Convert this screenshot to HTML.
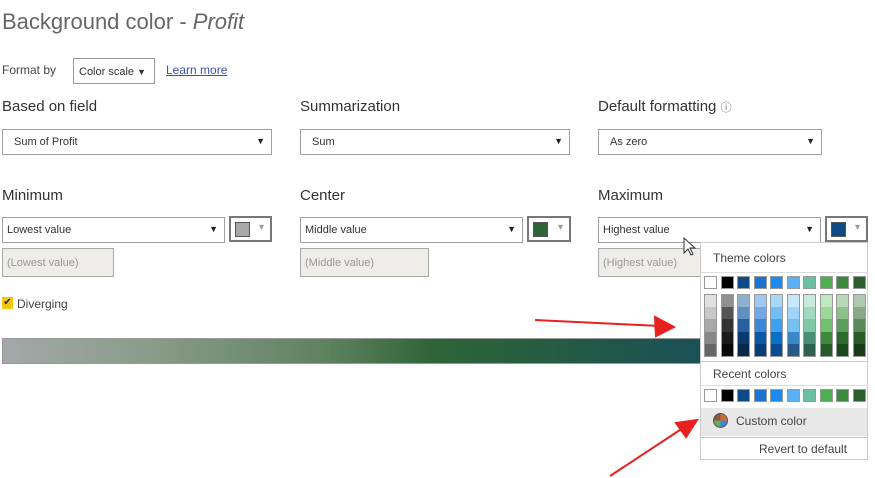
<!DOCTYPE html>
<html><head><style>
*{box-sizing:border-box;margin:0;padding:0}
body{width:875px;height:478px;background:#fff;font-family:"Liberation Sans",sans-serif;position:relative;overflow:hidden;color:#333}
.a{position:absolute}
.lbl{font-size:15px;color:#333}
.sel{position:absolute;height:26px;border:1px solid #a0a0a0;background:#fff;font-size:11px;padding:6px 11px;color:#333}
.sel::after{content:"▼";position:absolute;right:6px;top:6px;font-size:9px;color:#222}
.cb{position:absolute;height:26px;border:2px solid #777;background:#fff}
.cb i{position:absolute;left:4px;top:4px;width:15px;height:15px;border:1px solid #555}
.cb::after{content:"▾";position:absolute;right:6px;top:4px;font-size:10px;color:#999}
.sub{position:absolute;height:29px;border:1px solid #a8a8a8;background:#eeede8;font-size:11px;color:#999;padding:8px 4px}
.pop{position:absolute;left:700px;top:242px;width:168px;height:218px;border:1px solid #ccc;background:#fff}
.sw{position:absolute;width:13px;height:13px;border:1px solid #999}
</style></head><body>
<div class="a" style="left:2px;top:9px;font-size:22px;color:#666">Background color - <i>Profit</i></div>
<div class="a" style="left:2px;top:63px;font-size:12px;color:#444">Format by</div>
<div class="a" style="left:73px;top:58px;width:82px;height:26px;border:1px solid #999;font-size:11px;padding:7px 5px">Color scale <span style="font-size:9px">▼</span></div>
<div class="a" style="left:166px;top:63px;font-size:12px;color:#3c4fb0;text-decoration:underline">Learn more</div>

<div class="a lbl" style="left:2px;top:98px">Based on field</div>
<div class="a lbl" style="left:300px;top:98px">Summarization</div>
<div class="a lbl" style="left:598px;top:98px">Default formatting <span style="font-size:11px;color:#666">ⓘ</span></div>
<div class="sel" style="left:2px;top:129px;width:270px">Sum of Profit</div>
<div class="sel" style="left:300px;top:129px;width:270px">Sum</div>
<div class="sel" style="left:598px;top:129px;width:224px">As zero</div>

<div class="a lbl" style="left:2px;top:187px">Minimum</div>
<div class="a lbl" style="left:300px;top:187px">Center</div>
<div class="a lbl" style="left:598px;top:187px">Maximum</div>
<div class="sel" style="left:2px;top:217px;width:223px;padding-left:4px">Lowest value</div>
<div class="cb" style="left:229px;top:216px;width:43px"><i style="background:#a8a8a8"></i></div>
<div class="sel" style="left:300px;top:217px;width:223px;padding-left:4px">Middle value</div>
<div class="cb" style="left:527px;top:216px;width:44px"><i style="background:#2e6436"></i></div>
<div class="sel" style="left:598px;top:217px;width:223px;padding-left:4px">Highest value</div>
<div class="cb" style="left:825px;top:216px;width:43px"><i style="background:#0e4a84"></i></div>
<div class="sub" style="left:2px;top:248px;width:112px">(Lowest value)</div>
<div class="sub" style="left:300px;top:248px;width:129px">(Middle value)</div>
<div class="sub" style="left:598px;top:248px;width:110px">(Highest value)</div>

<div class="a" style="left:2px;top:297px;width:11px;height:12px;background:#f2c811;font-size:10px;line-height:12px;text-align:center;color:#222">✔</div>
<div class="a" style="left:17px;top:297px;font-size:12px;color:#444">Diverging</div>

<div class="a" style="left:2px;top:338px;width:720px;height:26px;border:1px solid #999;background:linear-gradient(90deg,#a4a8aa 0%,#8a9c8a 20%,#5f8260 45%,#2e6436 60%,#235a45 80%,#1a4d5a 100%)"></div>

<svg class="a" style="left:0;top:0" width="875" height="478">
<g stroke="#e82020" stroke-width="2" fill="#e82020">
<line x1="535" y1="320" x2="660" y2="326"/>
<polygon points="674,327 655,317 656,336"/>
<line x1="610" y1="476" x2="683" y2="428"/>
<polygon points="697,420 676,423 686,437"/>
</g>
<path d="M684 238 l0 15 l4 -4 l3 6 l2 -1 l-3 -6 l5 0 z" fill="#fff" stroke="#333" stroke-width="1"/>
</svg>

<div class="pop">
<div class="a" style="left:12px;top:8px;font-size:12px;color:#444">Theme colors</div>
<div class="a" style="left:0;top:29px;width:166px;border-top:1px solid #ddd"></div>
<div id="th"></div>
<div class="a" style="left:0;top:118px;width:166px;border-top:1px solid #ccc"></div>
<div class="a" style="left:12px;top:124px;font-size:12px;color:#444">Recent colors</div>
<div class="a" style="left:0;top:142px;width:166px;border-top:1px solid #ddd"></div>
<div class="a" style="left:0;top:165px;width:166px;height:28px;background:#e8e8e8"></div>
<div class="a" style="left:12px;top:170px;width:15px;height:15px;border-radius:50%;background:conic-gradient(#d96a2a 0 25%,#3a8ad0 0 50%,#6aa86a 0 75%,#8a5a3a 0);border:1px solid #555"></div>
<div class="a" style="left:35px;top:171px;font-size:12px;color:#444">Custom color</div>
<div class="a" style="left:0;top:194px;width:166px;border-top:1px solid #ccc"></div>
<div class="a" style="left:58px;top:199px;font-size:12px;color:#444">Revert to default</div>
</div>
<script>
var tc=["#fff","#000","#0e4a84","#1a74d0","#1a8cf0","#5ab0f0","#6ac0a0","#4ab050","#3a8a40","#2a6030"];
var sh=[["#e0e0e0","#c8c8c8","#a8a8a8","#888","#666"],["#909090","#555","#333","#1a1a1a","#0a0a0a"],["#90b0d0","#6090c0","#2a60a0","#0a3a70","#082848"],["#a0c8f0","#70a8e8","#3a88d8","#0a58a8","#063e78"],["#a8d8fa","#70c0f8","#40a0f0","#0a70c8","#084e90"],["#c8e8fa","#a0d4f8","#78c0f0","#3a88c8","#285a88"],["#c8eadc","#a0d8c0","#80c8a8","#4a9078","#306050"],["#c0e8c0","#98d898","#70c070","#3a8a3a","#285a28"],["#b8d8b8","#8ac08a","#5aa05a","#2a6a2a","#1a4a1a"],["#b0c8b0","#88a888","#5a885a","#2a5a2a","#183a18"]];
var h="";
for(var i=0;i<10;i++){var x=3+i*16.5;
h+='<div class="sw" style="left:'+x+'px;top:33px;background:'+tc[i]+'"></div>';
for(var j=0;j<5;j++)h+='<div class="a" style="left:'+x+'px;top:'+(51+j*12.6)+'px;width:13px;height:13px;background:'+sh[i][j]+';border-left:1px solid #999;border-right:1px solid #999'+(j==0?';border-top:1px solid #999':'')+(j==4?';border-bottom:1px solid #999':'')+'"></div>';
h+='<div class="sw" style="left:'+x+'px;top:146px;background:'+tc[i]+'"></div>';}
document.getElementById("th").innerHTML=h;
</script>
</body></html>
